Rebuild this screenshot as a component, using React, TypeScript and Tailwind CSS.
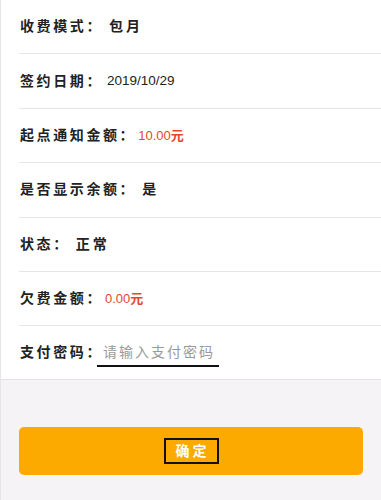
const ROWS: { label: string; value: string; kind: 'text' | 'num' | 'money' }[] = [
  { label: '收费模式：', value: '包月', kind: 'text' },
  { label: '签约日期：', value: '2019/10/29', kind: 'num' },
  { label: '起点通知金额：', value: '10.00', kind: 'money' },
  { label: '是否显示余额：', value: '是', kind: 'text' },
  { label: '状态：', value: '正常', kind: 'text' },
  { label: '欠费金额：', value: '0.00', kind: 'money' },
]

function Value({ value, kind }: { value: string; kind: 'text' | 'num' | 'money' }) {
  if (kind === 'money') {
    return (
      <span className="ml-[2px] text-[13px] text-[#e2482d]">
        {value}
        <span className="font-bold">元</span>
      </span>
    )
  }
  if (kind === 'num') {
    return <span className="ml-[4px] text-[13.5px] text-[#222]">{value}</span>
  }
  return <span className="ml-[6px] tracking-[3px] font-bold text-[#222]">{value}</span>
}

export default function App() {
  return (
    <div className="min-h-[500px] w-full bg-[#f6f3f6] border-l border-[#e6e6e6] font-['Liberation_Sans','Noto_Sans_CJK_SC',sans-serif]">
      <div className="bg-white pl-[18px] border-b border-[#e4e2e4]">
        {ROWS.map((row) => (
          <div
            key={row.label}
            className="h-[54.4px] flex items-center border-b border-[#e6e6e6] pl-[1px] text-[14px]"
          >
            <span className="tracking-[2.6px] font-bold text-[#222]">{row.label}</span>
            <Value value={row.value} kind={row.kind} />
          </div>
        ))}
        <div className="h-[53px] flex items-center pl-[1px] text-[14px]">
          <span className="tracking-[2.6px] font-bold text-[#222]">支付密码：</span>
          <input
            type="password"
            placeholder="请输入支付密码"
            className="-ml-[6px] mt-[1px] w-[122px] h-[27px] pl-[6px] border-b-2 border-[#111] outline-none bg-transparent text-[14px] tracking-[2px] placeholder:text-[#9a9a9a]"
          />
        </div>
      </div>
      <div className="pt-[47px] px-[18px]">
        <button className="w-full h-[48px] rounded-[5px] bg-[#fcaa00] flex items-center justify-center">
          <span className="w-[55px] h-[26px] border-2 border-[#111] flex items-center justify-center text-white font-bold text-[14px] tracking-[3px] pl-[3px]">
            确定
          </span>
        </button>
      </div>
    </div>
  )
}
